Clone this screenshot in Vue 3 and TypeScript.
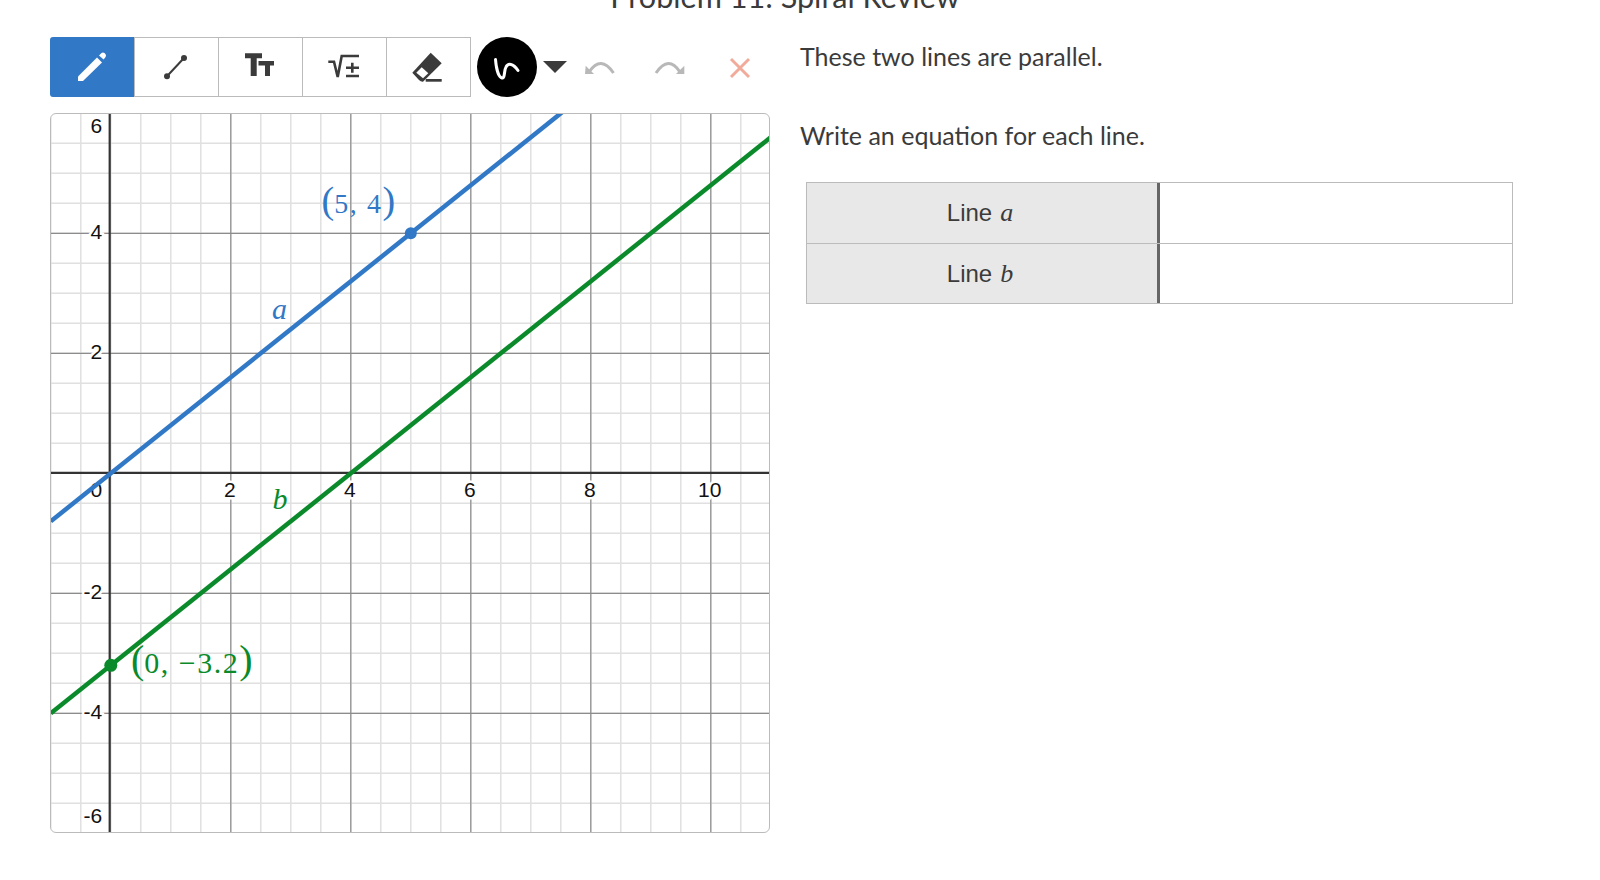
<template>
  <div class="page">
    <h2 class="title">Problem 11: Spiral Review</h2>
    <div class="columns">
      <div class="left">
        <div class="toolbar">
          <div class="tool-group">
            <button class="tool active">
              <svg width="34" height="34" viewBox="0 0 34 34">
                <path d="M3 31 L3 26.5 L22 7.5 L27 12.5 L8 31 Z" fill="#fff" />
                <path d="M24 5.5 L26.5 3 Q28 2 29.5 3 L30.6 4.2 Q31.6 5.8 30.4 7.2 L28.6 9.5 Z" fill="#fff" />
              </svg>
            </button>
            <button class="tool">
              <svg width="34" height="34" viewBox="0 0 34 34">
                <line x1="8" y1="26.3" x2="25" y2="8" stroke="#3b3b3b" stroke-width="2" />
                <circle cx="8" cy="26.3" r="3" fill="#3b3b3b" />
                <circle cx="25" cy="8" r="3" fill="#3b3b3b" />
              </svg>
            </button>
            <button class="tool">
              <svg width="34" height="34" viewBox="0 0 34 34">
                <path d="M2 3.3 H19 V8.3 H13.7 V26 H7.7 V8.3 H2 Z" fill="#3b3b3b" />
                <path d="M15.5 11 H31 V15.5 H27 V26 H22 V15.5 H15.5 Z" fill="#3b3b3b" />
              </svg>
            </button>
            <button class="tool">
              <svg width="34" height="34" viewBox="0 0 34 34">
                <path d="M1.3 11.7 H7 L10.7 27 L14.7 6 H32" fill="none" stroke="#3b3b3b" stroke-width="2.6" />
                <path d="M25.3 12.7 V22.7 M19 17.7 H32 M19 26 H32" fill="none" stroke="#3b3b3b" stroke-width="2.6" />
              </svg>
            </button>
            <button class="tool eraser">
              <svg width="36" height="36" viewBox="0 0 36 36">
                <path d="M3.3 23.7 L21.7 3.7 L32.7 14.3 L14 32.7 Q12 33 10 31 Z" fill="#3b3b3b" />
                <path d="M7.3 23.7 L12.7 18.3 L19.3 24.3 L14 29.3 Z" fill="#fff" />
                <rect x="16.7" y="30" width="16" height="2.7" fill="#3b3b3b" />
              </svg>
            </button>
          </div>
          <button class="pen-color">
            <svg width="30" height="30" viewBox="0 0 30 30">
              <path d="M3.5 7.5 C4 14 6 25 10 26 C13 27 12 18 14 15 C16 11 21 11 26 18.5" fill="none" stroke="#fff" stroke-width="3" stroke-linecap="round" />
            </svg>
          </button>
          <span class="caret"></span>
          <button class="plain undo">
            <svg width="32" height="18" viewBox="0 0 32 18">
              <path d="M5 12 Q17 -5.5 29.5 13" fill="none" stroke="#b8b8b8" stroke-width="3" />
              <path d="M1 14 H10 L1.7 5.7 Z" fill="#b8b8b8" />
            </svg>
          </button>
          <button class="plain redo">
            <svg width="32" height="18" viewBox="0 0 32 18">
              <path d="M2 13 Q14.5 -5.5 26 12" fill="none" stroke="#b8b8b8" stroke-width="3" />
              <path d="M30.3 14 H22 L30.3 5.7 Z" fill="#b8b8b8" />
            </svg>
          </button>
          <button class="plain clear">
            <svg width="22" height="22" viewBox="0 0 22 22">
              <path d="M2 2 L20 20 M20 2 L2 20" stroke="#f1ab9b" stroke-width="3" />
            </svg>
          </button>
        </div>

        <div class="graph">
          <svg width="718" height="718" viewBox="0 0 718 718">
            <line v-for="x in minorX" :key="'mx' + x" :x1="x" y1="0" :x2="x" y2="718" class="minor" />
            <line v-for="y in minorY" :key="'my' + y" x1="0" :y1="y" x2="718" :y2="y" class="minor" />
            <line v-for="t in xTicks" :key="'gx' + t" :x1="px(t)" y1="0" :x2="px(t)" y2="718" class="major" />
            <line v-for="t in gridY" :key="'gy' + t" x1="0" :y1="py(t)" x2="718" :y2="py(t)" class="major" />
            <line :x1="px(0) - 1.1" y1="0" :x2="px(0) - 1.1" y2="718" class="axis" />
            <line x1="0" :y1="py(0) - 0.5" x2="718" :y2="py(0) - 0.5" class="axis" />

            <g class="tick-labels">
              <text v-for="t in xTicks" :key="'lx' + t" :x="px(t) - 1" :y="py(0) + 24" text-anchor="middle">{{ t }}</text>
              <text v-for="t in yTicks" :key="'ly' + t" :x="px(0) - 8.6" :y="labelY(t)" text-anchor="end">{{ t }}</text>
              <text :x="px(0) - 8.6" :y="py(0) + 24" text-anchor="end">0</text>
            </g>

            <line :x1="px(-1)" :y1="py(-0.8)" :x2="px(7.6)" :y2="py(6.08)" class="line-a" />
            <line :x1="px(-1)" :y1="py(-4)" :x2="px(11)" :y2="py(5.6)" class="line-b" />
            <circle :cx="px(5)" :cy="py(4)" r="6" fill="#3178c6" />
            <circle :cx="px(0)" :cy="py(-3.2)" r="6.5" fill="#0a8a2a" />

            <text x="270.5" y="99" class="math blue paren">(<tspan class="pt-a">5, 4</tspan>)</text>
            <text x="221" y="205" class="math blue it">a</text>
            <text x="221.5" y="395" class="math green it">b</text>
            <text x="80" y="559" class="math green paren-l">(<tspan class="pt-b">0, −3.2</tspan>)</text>
          </svg>
        </div>
      </div>

      <div class="right">
        <p class="prompt first">These two lines are parallel.</p>
        <p class="prompt">Write an equation for each line.</p>
        <div class="answer-table">
          <div v-for="row in rows" :key="row" class="row">
            <div class="row-head">Line <i>{{ row }}</i></div>
            <div class="row-cell"></div>
          </div>
        </div>
      </div>
    </div>
  </div>
</template>

<script setup lang="ts">
const rows = ['a', 'b']
const xTicks = [2, 4, 6, 8, 10]
const yTicks = [6, 4, 2, -2, -4, -6]
const gridY = [4, 2, -2, -4]

function px(v: number): number {
  return 59.8 + v * 60
}
function py(v: number): number {
  return 359.3 - v * 60
}
// top and bottom labels sit inside the box
function labelY(t: number): number {
  if (t === 6) return 19
  if (t === -6) return 709
  return py(t) + 5.5
}

const minorX: number[] = []
for (let i = -2; i <= 22; i++) minorX.push(px(i / 2))
const minorY: number[] = []
for (let i = -12; i <= 12; i++) minorY.push(py(i / 2))
</script>

<style>
html, body { margin: 0; background: #fff; }
</style>

<style scoped>
.page {
  width: 1600px;
  height: 880px;
  overflow: hidden;
  font-family: Lato, "Liberation Sans", sans-serif;
  color: #3b3b3b;
}

.title {
  margin: -21px 0 0;
  height: 58px;
  font-size: 30.6px;
  line-height: 36px;
  font-weight: 400;
  text-align: center;
  padding-right: 30px;
}

.columns {
  display: flex;
  padding-left: 50px;
}

.left { width: 720px; flex: none; }

.toolbar {
  display: flex;
  align-items: center;
  height: 60px;
  margin-bottom: 16px;
}

.tool-group { display: flex; }

.tool {
  width: 85px;
  height: 60px;
  padding: 0 2px 0 0;
  margin-left: -1px;
  background: #fff;
  border: 1px solid #bbb;
  display: flex;
  align-items: center;
  justify-content: center;
}
.tool.active {
  width: 84px;
  margin-left: 0;
  padding: 0;
  background: #3178c6;
  border: none;
  border-radius: 3px 0 0 3px;
}
.tool.active + .tool { margin-left: 0; }
.tool.eraser { padding-right: 4px; }

.pen-color {
  width: 60px;
  height: 60px;
  margin-left: 6px;
  padding: 0;
  border: none;
  border-radius: 50%;
  background: #000;
  display: flex;
  align-items: center;
  justify-content: center;
}

.caret {
  margin-left: 6px;
  border-left: 12px solid transparent;
  border-right: 12px solid transparent;
  border-top: 12px solid #3b3b3b;
}

.plain {
  padding: 0;
  border: none;
  background: none;
  display: flex;
}
.plain svg { overflow: visible; }
.undo { margin: 4px 0 0 17px; }
.redo { margin: 4px 0 0 38px; }
.clear { margin: 2px 0 0 43px; }

.graph {
  width: 720px;
  height: 720px;
  box-sizing: border-box;
  border: 1px solid #bbb;
  border-radius: 6px;
  overflow: hidden;
}
.graph svg { display: block; }

.minor { stroke: #e0e0e0; stroke-width: 1.5; }
.major { stroke: #8c8c8c; stroke-width: 1.2; }
.axis { stroke: #333; stroke-width: 2.2; }

.tick-labels text {
  font-family: "Liberation Sans", sans-serif;
  font-size: 21px;
  fill: #111;
  stroke: #fff;
  stroke-width: 5px;
  paint-order: stroke;
}

.line-a { stroke: #3178c6; stroke-width: 4.5; }
.line-b { stroke: #0a8a2a; stroke-width: 4.5; }

.math { font-family: "Liberation Serif", serif; }
.blue { fill: #3178c6; }
.green { fill: #0a8a2a; }
.it { font-style: italic; font-size: 30px; }
.paren { font-size: 38px; }
.paren-l { font-size: 40px; }
.pt-a { font-size: 28px; letter-spacing: 1.6px; }
.pt-b { font-size: 30px; letter-spacing: 1.5px; }

.right {
  flex: 1;
  padding-left: 30px;
  min-width: 0;
}

.prompt {
  margin: 0 0 45px;
  font-size: 25px;
  line-height: 34px;
}
.prompt.first { margin-top: 2px; }

.answer-table {
  width: 707px;
  margin-left: 6px;
  margin-top: -15px;
  border: 1px solid #bbb;
  box-sizing: border-box;
}

.row { display: flex; height: 60px; box-sizing: border-box; }
.row + .row { border-top: 1px solid #bbb; }

.row-head {
  width: 353px;
  box-sizing: border-box;
  padding-right: 4px;
  background: #e8e8e8;
  border-right: 3px solid #666;
  display: flex;
  align-items: center;
  justify-content: center;
  gap: 8px;
  font-family: "Liberation Sans", sans-serif;
  font-size: 24px;
}
.row-head i { font-family: "Liberation Serif", serif; font-size: 26px; }

.row-cell { flex: 1; }
</style>
